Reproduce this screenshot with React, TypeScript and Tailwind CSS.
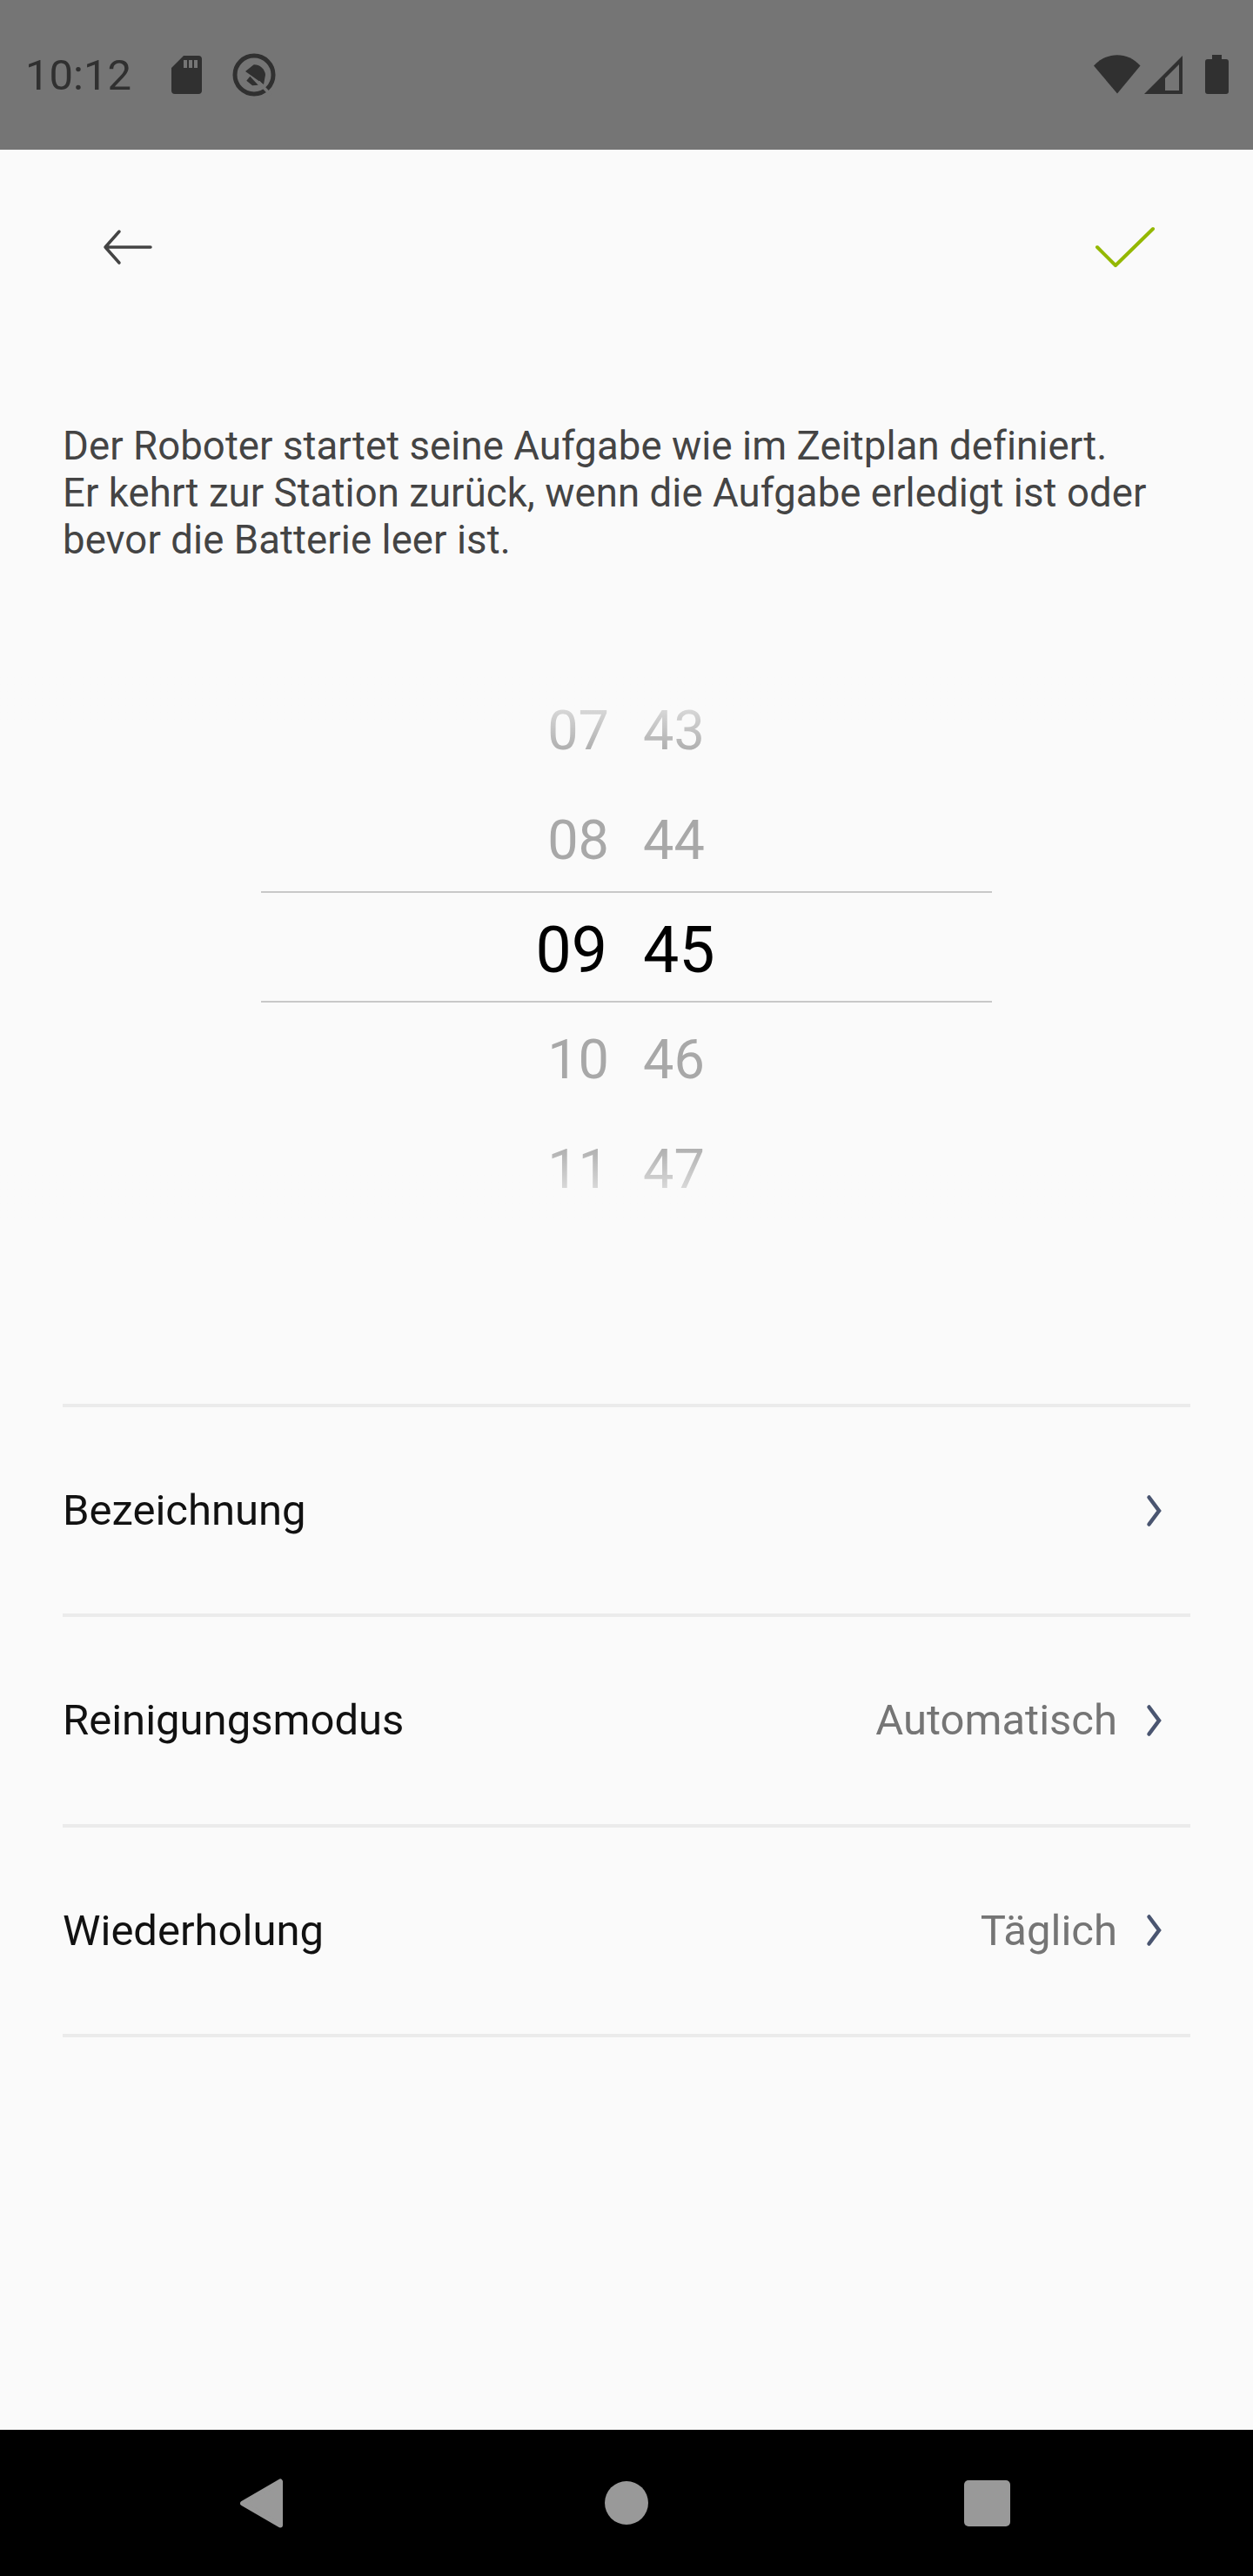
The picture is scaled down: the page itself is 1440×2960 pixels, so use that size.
const hours = ["07", "08", "09", "10", "11"];
const minutes = ["43", "44", "45", "46", "47"];

const settings = [
  { label: "Bezeichnung", value: "" },
  { label: "Reinigungsmodus", value: "Automatisch" },
  { label: "Wiederholung", value: "Täglich" },
];

function StatusBar() {
  return (
    <div className="flex h-[172px] items-start justify-between bg-[#757575] text-[#303030]">
      <div className="flex items-start">
        <span className="ml-[29px] mt-[58px] text-[49px] leading-[57px]">10:12</span>
        <svg className="ml-[46px] mt-[64px]" width="36" height="44" viewBox="0 0 36 44">
          <path
            fill="currentColor"
            fillRule="evenodd"
            d="M14 0H31a4 4 0 0 1 4 4V40a4 4 0 0 1-4 4H4a4 4 0 0 1-4-4V14ZM14 5V14H18V5ZM20 5V14H24V5ZM26 5V14H30V5Z"
          />
        </svg>
        <svg className="ml-[34px] mt-[61px]" width="50" height="50" viewBox="0 0 50 50">
          <circle cx="25" cy="25" r="22" fill="none" stroke="currentColor" strokeWidth="5" />
          <path fill="currentColor" d="M15 21L24.7 13.3A13 13 0 0 1 38 25L36 36Z" />
          <path fill="currentColor" d="M16.3 31.7L20.3 26.7L29.7 36.7L23 37.3Z" />
          <path stroke="#757575" strokeWidth="3.5" d="M30 33L44 48" />
        </svg>
      </div>
      <div className="mr-[28px] mt-[63px] flex items-start">
        <svg width="54" height="45" viewBox="0 0 54 45">
          <path fill="currentColor" d="M0 12.5C15 -4 39 -4 53.5 12.5L27 44.5Z" />
        </svg>
        <svg className="ml-[4px] mt-[1px]" width="45" height="45" viewBox="0 0 45 45">
          <path fill="currentColor" fillRule="evenodd" d="M44 0V44H0ZM40 10L24 26V40H40Z" />
        </svg>
        <svg className="ml-[25px]" width="27" height="45" viewBox="0 0 27 45">
          <path
            fill="currentColor"
            d="M8 0H19V5H24a3 3 0 0 1 3 3V42a3 3 0 0 1-3 3H3a3 3 0 0 1-3-3V8a3 3 0 0 1 3-3H8Z"
          />
        </svg>
      </div>
    </div>
  );
}

function TimePicker() {
  return (
    <div className="relative mt-[127px] h-[630px]">
      <div className="flex pl-[400px] pt-[2px]">
        <div className="flex w-[300px] flex-col items-end">
          {hours.map((h, i) => (
            <div
              key={h}
              className={
                i === 2
                  ? "flex h-[126px] items-center pr-[2px] text-[73.5px] text-black"
                  : "flex h-[126px] items-center text-[63px] text-[#a8a8a8]"
              }
            >
              {h}
            </div>
          ))}
        </div>
        <div className="flex w-[300px] flex-col items-start pl-[39px]">
          {minutes.map((m, i) => (
            <div
              key={m}
              className={
                i === 2
                  ? "flex h-[126px] items-center text-[73.5px] text-black"
                  : "flex h-[126px] items-center text-[63px] text-[#a8a8a8]"
              }
            >
              {m}
            </div>
          ))}
        </div>
      </div>
      {/* fade on the outer rows */}
      <div className="absolute inset-x-0 top-0 h-[125px] bg-gradient-to-b from-[#fafafa] to-transparent to-[76%]" />
      <div className="absolute inset-x-0 bottom-0 h-[125px] bg-gradient-to-t from-[#fafafa] to-transparent to-[76%]" />
      <div className="absolute left-[300px] top-[249px] h-[2px] w-[840px] bg-[#c8c8c8]" />
      <div className="absolute left-[300px] top-[375px] h-[2px] w-[840px] bg-[#c8c8c8]" />
    </div>
  );
}

function SettingRow({ label, value }: { label: string; value: string }) {
  return (
    <div className="flex h-[241.33px] items-center justify-between border-b-4 border-[#ebebeb]">
      <span className="text-[49px] text-[#111111]">{label}</span>
      <div className="flex items-center">
        {value && <span className="text-[49px] text-[#757575]">{value}</span>}
        <svg className="ml-[33px] mr-[33px]" width="18" height="38" viewBox="0 0 18 38">
          <path
            d="M3.5 3.5L15 19L3.5 34.5"
            fill="none"
            stroke="#4a5570"
            strokeWidth="4.5"
            strokeLinecap="round"
          />
        </svg>
      </div>
    </div>
  );
}

export default function App() {
  return (
    <div className="flex h-[2960px] w-[1440px] flex-col bg-[#fafafa] font-['Roboto',sans-serif]">
      <StatusBar />
      <div className="flex h-[224px] items-center justify-between pl-[117px] pr-[109px]">
        <svg width="60" height="60" viewBox="0 0 60 60">
          <path
            d="M20 12L4 30L20 48M4 30H56"
            fill="none"
            stroke="#444444"
            strokeWidth="3.5"
            strokeLinecap="round"
            strokeLinejoin="round"
          />
        </svg>
        <svg width="76" height="60" viewBox="0 0 76 60">
          <path
            d="M6 30L27 51L70 9"
            fill="none"
            stroke="#94b800"
            strokeWidth="4"
            strokeLinecap="round"
            strokeLinejoin="round"
          />
        </svg>
      </div>
      <p className="mt-[90px] px-[72px] text-[45.5px] leading-[54px] tracking-[0.09px] text-[#444444]">
        Der Roboter startet seine Aufgabe wie im Zeitplan definiert.
        <br />
        Er kehrt zur Station zurück, wenn die Aufgabe erledigt ist oder
        <br />
        bevor die Batterie leer ist.
      </p>
      <TimePicker />
      <div className="mx-[72px] flex-1">
        <div className="mt-[208px] h-[4px] bg-[#ebebeb]" />
        {settings.map((s) => (
          <SettingRow key={s.label} label={s.label} value={s.value} />
        ))}
      </div>
      <div className="flex h-[168px] items-center bg-black">
        <svg className="ml-[276px]" width="49" height="57" viewBox="0 0 49 57">
          <path
            fill="#999999"
            stroke="#999999"
            strokeWidth="6"
            strokeLinejoin="round"
            d="M3 28.5L46 3.5V53.5Z"
          />
        </svg>
        <div className="ml-[370px] h-[50px] w-[50px] rounded-full bg-[#999999]" />
        <div className="ml-[363px] h-[53px] w-[53px] rounded-[5px] bg-[#999999]" />
      </div>
    </div>
  );
}
